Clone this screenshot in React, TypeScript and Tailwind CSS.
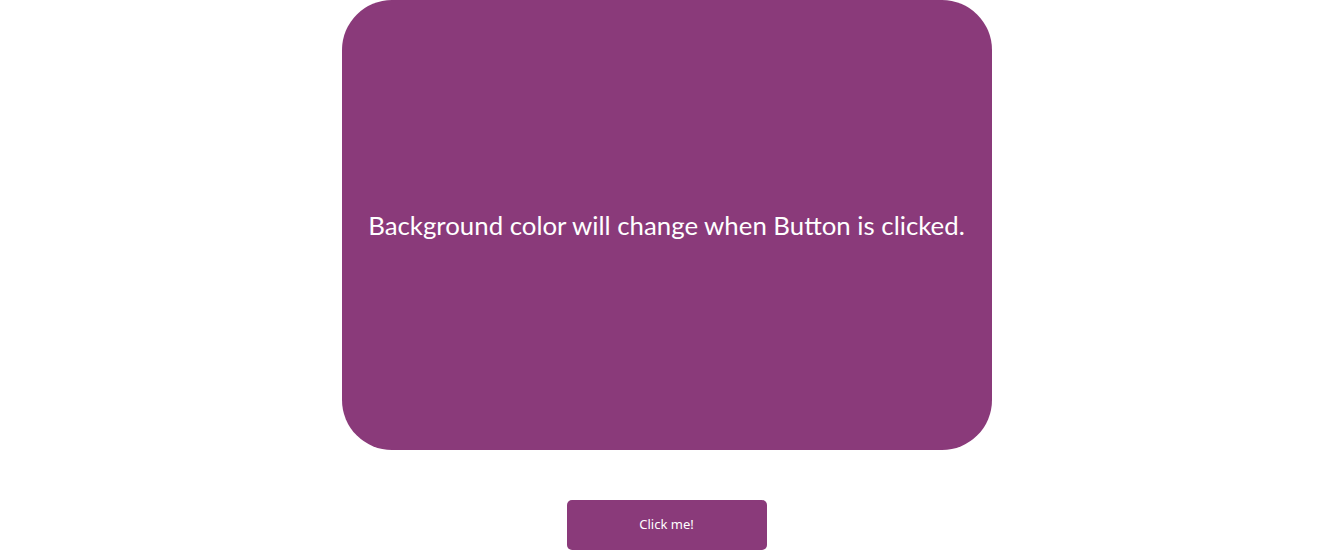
import React from 'react'

export default function App() {
  return (
    <div className="flex flex-col items-center bg-white min-h-[550px]">
      <div className="w-[650px] h-[450px] rounded-[50px] bg-[#8a3a7a] flex items-center justify-center">
        <p className="text-white text-[25.8px] font-['Lato',sans-serif]">
          Background color will change when Button is clicked.
        </p>
      </div>
      <button className="mt-[50px] w-[200px] h-[50px] rounded-[5px] bg-[#8a3a7a] text-white text-[13px] font-['Noto_Sans',sans-serif]">
        Click me!
      </button>
    </div>
  )
}
